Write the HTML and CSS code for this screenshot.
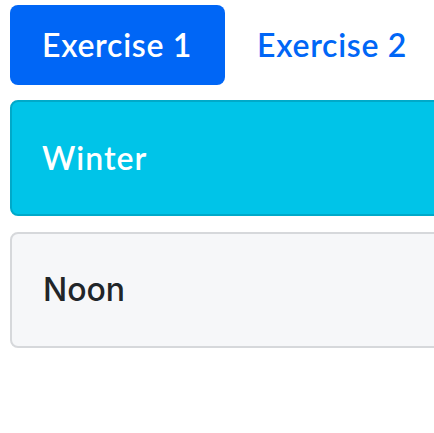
FILE: index.html
```html
<!DOCTYPE html>
<html>
<head>
<meta charset="utf-8">
<link rel="stylesheet" href="styles.css">
</head>
<body>
<div class="page">
  <nav class="pills">
    <a class="pill active">Exercise 1</a>
    <a class="pill">Exercise 2</a>
  </nav>
  <div class="card card-info">Winter</div>
  <div class="card card-light">Noon</div>
</div>
</body>
</html>
```
FILE: styles.css
```css
html, body {
  margin: 0;
  padding: 0;
  background: #ffffff;
}
.page {
  padding: 5px 0 0 10px;
  display: flex;
  flex-direction: column;
  overflow: hidden;
}
.pills {
  display: flex;
  margin-bottom: 15px;
}
.pill {
  flex-shrink: 0;
  white-space: nowrap;
  font-family: Lato, "Noto Sans", sans-serif;
  font-size: 32px;
  font-weight: 600;
  letter-spacing: 0.7px;
  line-height: 48px;
  padding: 16px 33px 16px 32px;
  border-radius: 8px;
  color: #0066f6;
  text-decoration: none;
}
.pill.active {
  background: #0066f6;
  color: #ffffff;
}
.card {
  border: 2px solid;
  border-radius: 8px;
  padding: 32px 30px;
  font-size: 32px;
  line-height: 48px;
  margin-bottom: 16px;
  margin-right: -40px;
}
.card-info {
  background: #00c4e8;
  border-color: #00a9c9;
  color: #ffffff;
  font-family: Lato, "Noto Sans", sans-serif;
  font-weight: 600;
  letter-spacing: 1px;
}
.card-light {
  background: #f6f7f9;
  border-color: #d6d8db;
  color: #212529;
  font-family: Inter, "Liberation Sans", sans-serif;
  font-weight: 500;
  padding-left: 31px;
}
```
